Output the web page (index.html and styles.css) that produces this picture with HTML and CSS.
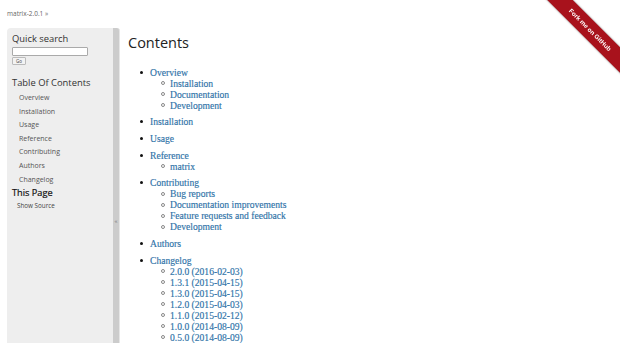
FILE: index.html
```html
<!DOCTYPE html>
<html>
<head>
<meta charset="utf-8">
<title>Contents — matrix 2.0.1</title>
<link rel="stylesheet" href="styles.css">
</head>
<body>
<div class="related"><a href="#">matrix-2.0.1</a> &raquo;</div>
<div class="wrap">
  <div class="sidebar">
    <h3 class="sb-title">Quick search</h3>
    <form class="search">
      <input class="search-input" type="text">
      <button class="go" type="button">Go</button>
    </form>
    <h3 class="sb-title toc-title">Table Of Contents</h3>
    <ul class="sb-list">
      <li><a href="#">Overview</a></li>
      <li><a href="#">Installation</a></li>
      <li><a href="#">Usage</a></li>
      <li><a href="#">Reference</a></li>
      <li><a href="#">Contributing</a></li>
      <li><a href="#">Authors</a></li>
      <li><a href="#">Changelog</a></li>
    </ul>
    <h3 class="sb-title page-title">This Page</h3>
    <ul class="sb-page">
      <li><a href="#">Show Source</a></li>
    </ul>
  </div>
  <div class="collapse"><span class="collapse-btn">&laquo;</span></div>
  <div class="main">
    <h1 class="title">Contents</h1>
    <ul class="toc">
      <li><a href="#">Overview</a>
        <ul>
          <li><a href="#">Installation</a></li>
          <li><a href="#">Documentation</a></li>
          <li><a href="#">Development</a></li>
        </ul>
      </li>
      <li><a href="#">Installation</a></li>
      <li><a href="#">Usage</a></li>
      <li><a href="#">Reference</a>
        <ul>
          <li><a href="#">matrix</a></li>
        </ul>
      </li>
      <li><a href="#">Contributing</a>
        <ul>
          <li><a href="#">Bug reports</a></li>
          <li><a href="#">Documentation improvements</a></li>
          <li><a href="#">Feature requests and feedback</a></li>
          <li><a href="#">Development</a></li>
        </ul>
      </li>
      <li><a href="#">Authors</a></li>
      <li><a href="#">Changelog</a>
        <ul>
          <li><a href="#">2.0.0 (2016-02-03)</a></li>
          <li><a href="#">1.3.1 (2015-04-15)</a></li>
          <li><a href="#">1.3.0 (2015-04-15)</a></li>
          <li><a href="#">1.2.0 (2015-04-03)</a></li>
          <li><a href="#">1.1.0 (2015-02-12)</a></li>
          <li><a href="#">1.0.0 (2014-08-09)</a></li>
          <li><a href="#">0.5.0 (2014-08-09)</a></li>
        </ul>
      </li>
    </ul>
  </div>
</div>
<div class="ribbon-wrap"><a class="ribbon" href="#">Fork me on GitHub</a></div>
</body>
</html>
```
FILE: styles.css
```css
html, body {
  margin: 0;
  padding: 0;
  background: #fff;
}
body {
  font-family: "Open Sans", "DejaVu Sans", sans-serif;
  color: #222;
  overflow: hidden;
  height: 343px;
}
a { text-decoration: none; }

.related {
  height: 28px;
  box-sizing: border-box;
  padding: 9px 0 0 7px;
  font-size: 6.5px;
  line-height: 9px;
  color: #666;
}
.related a { color: #666; }

.wrap {
  display: flex;
  padding-left: 7px;
  height: 315px;
}

.sidebar {
  width: 106px;
  flex: none;
  box-sizing: border-box;
  background: #eeeeee;
  border-radius: 4px 0 0 0;
  padding: 5px 0 0 5px;
}
.sb-title {
  margin: 0;
  font-size: 9.4px;
  line-height: 12px;
  font-weight: 400;
  color: #333;
}
.search {
  margin: 2px 0 0 0;
  display: flex;
  flex-direction: column;
  align-items: flex-start;
}
.search-input {
  width: 76px;
  height: 9px;
  box-sizing: border-box;
  margin: 0;
  padding: 0;
  border: 1px solid #aaa;
  background: #fff;
  border-radius: 1px;
}
.go {
  margin-top: 1px;
  width: 14px;
  height: 8px;
  box-sizing: border-box;
  padding: 0;
  font-family: "Open Sans", sans-serif;
  font-size: 4.5px;
  line-height: 6px;
  color: #444;
  background: #f3f3f3;
  border: 1px solid #bbb;
  border-radius: 1px;
}
.toc-title { margin-top: 12px; }
.sb-list {
  list-style: none;
  margin: 2px 0 0 0;
  padding: 0 0 0 7px;
}
.sb-list li {
  font-size: 7px;
  line-height: 13.6px;
}
.sb-list a { color: #555; }
.page-title {
  margin-top: 1px;
  font-size: 9.2px;
  font-weight: 400;
  color: #111;
  -webkit-text-stroke: 0.2px #111;
}
.sb-page {
  list-style: none;
  margin: 1px 0 0 0;
  padding: 0 0 0 5px;
}
.sb-page li {
  font-size: 6.3px;
  line-height: 12px;
}
.sb-page a { color: #444; }

.collapse {
  width: 6px;
  flex: none;
  background: #cccccc;
  border-right: 1px solid #e6e6e6;
  border-radius: 0 3px 0 0;
  display: flex;
  justify-content: center;
  align-items: flex-start;
}
.collapse-btn {
  margin-top: 189px;
  font-size: 6px;
  line-height: 8px;
  color: #777;
}

.main {
  flex: 1;
  padding-left: 8px;
}
.title {
  margin: 6px 0 0 0;
  font-size: 14.5px;
  line-height: 18px;
  font-weight: 400;
  color: #222;
}
.toc {
  margin: 14.5px 0 0 0;
  padding: 0 0 0 22px;
  list-style: none;
  font-family: "Liberation Serif", "Times New Roman", serif;
  font-size: 9.6px;
  line-height: 11px;
  color: #222;
}
.toc > li + li { margin-top: 5.7px; }
.toc > li::before {
  content: "";
  display: inline-block;
  width: 3px;
  height: 3px;
  border-radius: 50%;
  background: #111;
  margin-left: -10.5px;
  margin-right: 7.5px;
  vertical-align: 2px;
}
.toc ul {
  margin: 0;
  padding: 0 0 0 20px;
  list-style: none;
}
.toc ul li::before {
  content: "";
  display: inline-block;
  box-sizing: border-box;
  width: 4px;
  height: 4px;
  border-radius: 50%;
  border: 1px solid #888;
  margin-left: -9px;
  margin-right: 5px;
  vertical-align: 1.5px;
}
.toc a {
  color: #2f73a8;
  -webkit-text-stroke: 0.15px #2f73a8;
}

.ribbon-wrap {
  position: fixed;
  top: 0;
  right: 0;
  width: 100px;
  height: 100px;
  overflow: hidden;
}
.ribbon {
  position: absolute;
  left: -30px;
  top: 21px;
  width: 200px;
  height: 18px;
  box-sizing: border-box;
  background: #a8121c;
  color: #fff;
  font-family: "Liberation Sans", Arial, sans-serif;
  font-weight: 700;
  font-size: 6.3px;
  line-height: 18px;
  text-align: center;
  transform: rotate(45deg);
  box-shadow: 0 0 2px rgba(0,0,0,0.5);
}
```
